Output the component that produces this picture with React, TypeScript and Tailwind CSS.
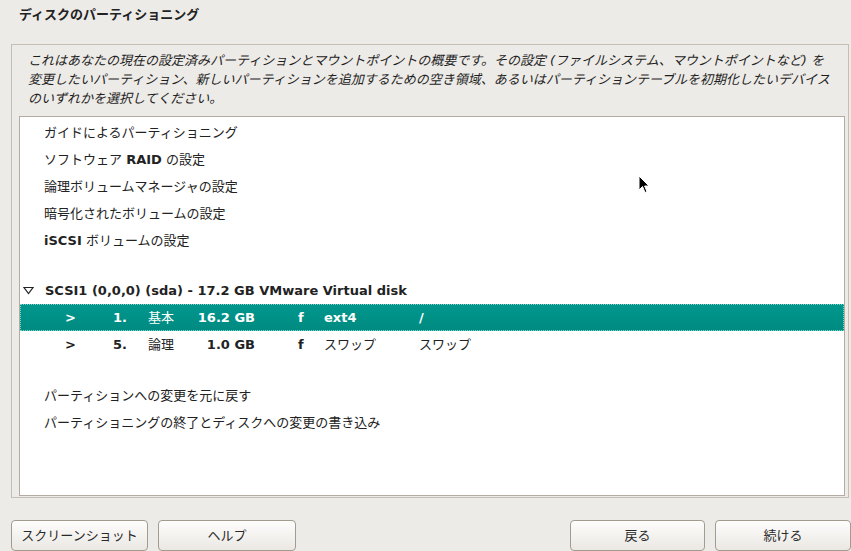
import React from 'react';

const font = { fontFamily: '"DejaVu Sans", "Noto Sans CJK JP", sans-serif' };

function Item({ children }: { children: React.ReactNode }) {
  return <div className="flex h-[27px] items-center whitespace-nowrap pl-[24px]">{children}</div>;
}

function PartRow({
  num,
  kind,
  size,
  fs,
  mount,
  latin,
  selected,
}: {
  num: string;
  kind: string;
  size: string;
  fs: string;
  mount: string;
  latin?: boolean;
  selected?: boolean;
}) {
  return (
    <div
      className={
        selected
          ? 'flex h-[27px] items-center whitespace-nowrap border border-dotted border-[#7fd0c8] bg-gradient-to-b from-[#00978d] to-[#008a80] text-white'
          : 'flex h-[27px] items-center whitespace-nowrap border border-transparent'
      }
    >
      <span className="w-[44px] shrink-0" />
      <span className="w-[48px] shrink-0 font-bold">&gt;</span>
      <span className="w-[35px] shrink-0 font-bold">{num}</span>
      <span className="w-[45px] shrink-0">{kind}</span>
      <span className="w-[62px] shrink-0 text-right font-bold">{size}</span>
      <span className="w-[43px] shrink-0" />
      <span className="w-[26px] shrink-0 font-bold">f</span>
      <span className={latin ? 'w-[95px] shrink-0 font-bold' : 'w-[95px] shrink-0'}>{fs}</span>
      <span className={latin ? 'font-bold' : ''}>{mount}</span>
    </div>
  );
}

function Button({ label, w }: { label: string; w: string }) {
  return (
    <button
      className={`${w} h-[31px] shrink-0 rounded-[4px] border border-[#a39b90] bg-gradient-to-b from-[#fdfdfc] to-[#ebe8e3] text-[13px] text-[#2a2a2a]`}
    >
      {label}
    </button>
  );
}

export default function App() {
  return (
    <div
      className="relative flex h-[551px] w-[851px] flex-col overflow-hidden bg-[#edebe7] text-[13px] text-[#222]"
      style={font}
    >
      <div className="h-[44px] pl-[19px] pt-[6px] font-bold leading-[18px]">ディスクのパーティショニング</div>

      <div className="ml-[11px] flex h-[455px] w-[838px] flex-col border border-[#c6beb3]">
        <div className="pl-[16px] pt-[6px] italic leading-[19px] text-[#1e1e1e]">
          <div className="whitespace-nowrap">
            これはあなたの現在の設定済みパーティションとマウントポイントの概要です。その設定 (ファイルシステム、マウントポイントなど) を
          </div>
          <div className="whitespace-nowrap">
            変更したいパーティション、新しいパーティションを追加するための空き領域、あるいはパーティションテーブルを初期化したいデバイス
          </div>
          <div className="whitespace-nowrap">のいずれかを選択してください。</div>
        </div>

        <div className="ml-[7px] mt-[8px] h-[380px] w-[826px] border border-[#b3aba0] bg-white pt-[2px]">
          <Item>ガイドによるパーティショニング</Item>
          <Item>
            ソフトウェア&nbsp;<b>RAID</b>&nbsp;の設定
          </Item>
          <Item>論理ボリュームマネージャの設定</Item>
          <Item>暗号化されたボリュームの設定</Item>
          <Item>
            <b>iSCSI</b>&nbsp;ボリュームの設定
          </Item>
          <div className="h-[23px]" />
          <div className="flex h-[27px] items-center whitespace-nowrap pl-[3px] font-bold">
            <svg width="11" height="9" viewBox="0 0 11 9" className="mr-[11px]">
              <path d="M1 1.5 L10 1.5 L5.5 7.5 Z" fill="none" stroke="#222" strokeWidth="1.2" />
            </svg>
            SCSI1 (0,0,0) (sda) - 17.2 GB VMware Virtual disk
          </div>
          <PartRow num="1." kind="基本" size="16.2 GB" fs="ext4" mount="/" latin selected />
          <PartRow num="5." kind="論理" size="1.0 GB" fs="スワップ" mount="スワップ" />
          <div className="h-[24px]" />
          <Item>パーティションへの変更を元に戻す</Item>
          <Item>パーティショニングの終了とディスクへの変更の書き込み</Item>
        </div>
      </div>

      <div className="mt-[22px] flex pl-[11px]">
        <Button label="スクリーンショット" w="w-[137px]" />
        <div className="w-[10px]" />
        <Button label="ヘルプ" w="w-[138px]" />
        <div className="w-[275px]" />
        <Button label="戻る" w="w-[135px]" />
        <div className="w-[10px]" />
        <Button label="続ける" w="w-[136px]" />
      </div>

      {/* mouse pointer */}
      <svg className="absolute left-[638px] top-[175px]" width="12" height="19" viewBox="0 0 12 19">
        <path d="M1 1 L1 15 L4.5 11.5 L7 17.5 L9 16.6 L6.6 11 L11 11 Z" fill="#000" stroke="#fff" strokeWidth="1" />
      </svg>
    </div>
  );
}
